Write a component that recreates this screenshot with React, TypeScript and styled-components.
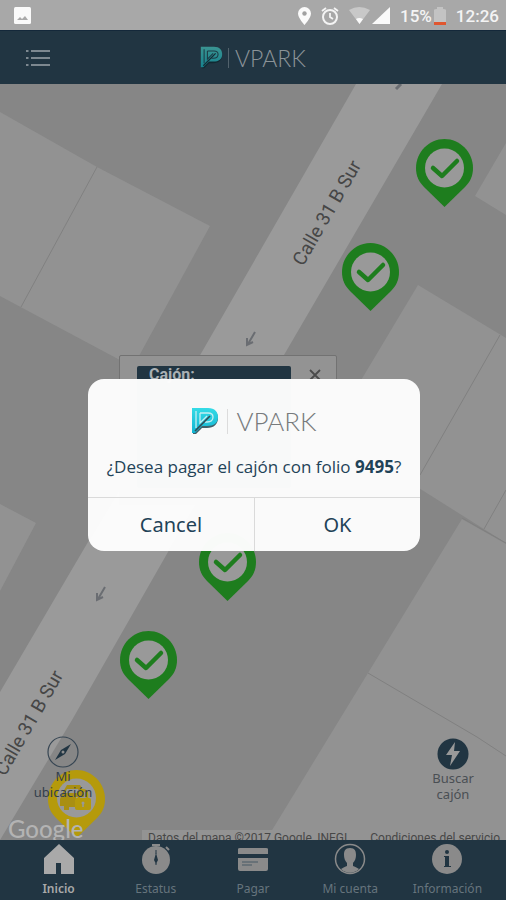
import React from "react";
import styled, { createGlobalStyle } from "styled-components";

const NAVY = "#213542";
const INK = "#1f4358";

const GlobalStyle = createGlobalStyle`
  * { box-sizing: border-box; }
  body { margin: 0; background: ${NAVY}; font-family: "Noto Sans", "Open Sans", sans-serif; }
  button { font: inherit; color: inherit; background: none; border: 0; padding: 0; cursor: pointer; }
`;

const Screen = styled.div`
  position: relative;
  display: flex;
  flex-direction: column;
  min-height: 100vh;
  overflow: hidden;
`;

const StatusBar = styled.header`
  display: flex;
  align-items: center;
  justify-content: space-between;
  height: 30px;
  padding: 1px 7px 0 14px;
  background: #a8a8a8;
  color: #f4f4f4;
  font: 500 17px/28px Roboto, sans-serif;
`;

const StatusGroup = styled.div`
  display: flex;
  align-items: center;
  gap: 10px;
`;

const SignalIcons = styled.div`
  display: flex;
  align-items: center;
  gap: 2px;
`;

const Battery = styled.span`
  display: flex;
  align-items: center;
  gap: 2px;
`;

const TitleBar = styled.div`
  display: grid;
  grid-template-columns: 1fr auto 1fr;
  align-items: center;
  height: 54px;
  padding: 0 25px;
  background: ${NAVY};
  border-top: 1px solid #14283a;
`;

const MenuButton = styled.button`
  display: flex;
  justify-self: start;
`;

const Brand = styled.div<{ $large?: boolean }>`
  display: flex;
  align-items: center;
  justify-content: center;
  min-height: ${(p) => (p.$large ? 32 : 28)}px;
  color: ${(p) => (p.$large ? "#777b7d" : "#8b9398")};
  font: ${(p) => (p.$large ? "300 26px/32px" : "300 23px/28px")} Lato, sans-serif;
  svg { width: ${(p) => (p.$large ? 28 : 23)}px; height: ${(p) => (p.$large ? 28 : 23)}px; }
`;

const BrandName = styled.span<{ $large?: boolean }>`
  margin-left: ${(p) => (p.$large ? 8 : 5)}px;
  padding-left: ${(p) => (p.$large ? 8 : 6)}px;
  border-left: 1px solid ${(p) => (p.$large ? "#dcdcdc" : "#52626c")};
  line-height: ${(p) => (p.$large ? 25 : 20)}px;
`;

const MapArea = styled.main`
  position: relative;
  flex: 1;
  min-height: 500px;
  overflow: hidden;
  background: #868686;
`;

const MapDrawing = styled.svg`
  position: absolute;
  inset: 0;
  width: 100%;
  height: 100%;
  font: 19px Roboto, sans-serif;
`;

const PinButton = styled.button<{ $x: number; $y: number }>`
  position: absolute;
  left: ${(p) => p.$x}px;
  top: ${(p) => p.$y}px;
  display: flex;
`;

const InfoWindow = styled.section`
  position: absolute;
  left: 119px;
  top: 271px;
  display: flex;
  align-items: flex-start;
  justify-content: space-between;
  width: 218px;
  height: 150px;
  padding: 10px 13px 0 17px;
  background: #939393;
  border: 1px solid #727272;
  border-radius: 2px;
  color: #4b4b4b;
`;

const InfoCard = styled.div`
  width: 154px;
  height: 122px;
  padding: 0 12px;
  border-radius: 2px;
  background: ${NAVY};
  color: #a9b0b4;
  font: 700 16px/18px Roboto, sans-serif;
`;

const MapAction = styled.button<{ $side: "left" | "right" }>`
  position: absolute;
  ${(p) => (p.$side === "left" ? "left: 28px; bottom: 40px;" : "right: 18px; bottom: 38px;")}
  display: flex;
  flex-direction: column;
  align-items: center;
  width: 70px;
  color: ${(p) => (p.$side === "left" ? "#333f4c" : "#4a4f54")};
  font-size: 13px;
  line-height: 16px;
`;

const Watermark = styled.span`
  position: absolute;
  left: 8px;
  bottom: -3px;
  color: #b3b3b3;
  font: 500 24px/28px Lato, sans-serif;
`;

const Attribution = styled.div`
  position: absolute;
  right: 0;
  bottom: -6px;
  display: flex;
  justify-content: space-between;
  width: 364px;
  padding: 0 6px;
  background: #939393;
  color: #474747;
  font: 12px/16px Roboto, sans-serif;
  a { color: inherit; text-decoration: none; }
`;

const TabBar = styled.nav`
  display: grid;
  grid-template-columns: repeat(5, 1fr);
  height: 60px;
  padding: 3px 10px 0;
  background: ${NAVY};
`;

const Tab = styled.button<{ $active?: boolean }>`
  display: flex;
  flex-direction: column;
  align-items: center;
  gap: 5px;
  color: ${(p) => (p.$active ? "#a9a9a9" : "#66747d")};
  font-size: 12px;
  font-weight: ${(p) => (p.$active ? 600 : 400)};
  line-height: 18px;
  white-space: nowrap;
  svg { color: ${(p) => (p.$active ? "#a9a9a9" : "#8a8a8a")}; }
`;

const DialogLayer = styled.div`
  position: absolute;
  inset: 30px 0 0;
  display: grid;
  place-items: center;
  padding: 0 86px 0 88px;
`;

const Dialog = styled.div`
  width: 100%;
  max-width: 400px;
  overflow: hidden;
  border-radius: 16px;
  background: rgba(252, 252, 252, 0.985);
  color: ${INK};
`;

const DialogBody = styled.div`
  display: flex;
  flex-direction: column;
  gap: 18px;
  padding: 26px 0 18px;
`;

const Message = styled.p`
  margin: 0;
  text-align: center;
  font-family: "Open Sans", "Noto Sans", sans-serif;
  font-size: 17px;
  line-height: 24px;
`;

const DialogActions = styled.div`
  display: grid;
  grid-template-columns: 1fr 1fr;
  border-top: 1px solid #dadada;
`;

const ActionButton = styled.button`
  height: 53px;
  && { font-size: 20px; }
  & + & { border-left: 1px solid #dadada; }
`;

const BrandMark = ({ dim }: { dim?: boolean }) => (
  <svg viewBox="0 0 28 28" fill="none" aria-hidden="true">
    <defs>
      <linearGradient id={dim ? "markDim" : "mark"} x1="0" y1="0" x2="0" y2="1">
        <stop offset="0" stopColor={dim ? "#3a9492" : "#35dbe6"} />
        <stop offset="1" stopColor={dim ? "#16838f" : "#12b4d2"} />
      </linearGradient>
    </defs>
    <path d="M2 2h15c7 0 10 4 10 9 0 6-4 10-11 10h-5l-6 6H2z" fill={dim ? "#122831" : "#40616a"} />
    <path d="M1 1h16c7 0 10 4 10 9 0 6-4 9-11 9h-5l-7 7H1z" fill={`url(#${dim ? "markDim" : "mark"})`} />
    <path d="M5 4v17M9 6h8c4 0 5 2 5 4 0 3-2 5-6 5h-2M9 6v10l7-7" stroke={dim ? "#1d3b46" : "#c5eef2"} strokeWidth="1.300" />
    <path d="M4 24L19 9" stroke={dim ? "#142b35" : "#334a52"} strokeWidth="1.600" />
  </svg>
);

const Logo = ({ large }: { large?: boolean }) => (
  <Brand $large={large}>
    <BrandMark dim={!large} />
    <BrandName $large={large}>VPARK</BrandName>
  </Brand>
);

const PIN_SHAPE = "M28.500 0C44 0 57 13 57 29c0 8-3 14-8 19L28.500 68 8 48C3 43 0 37 0 29 0 13 13 0 28.500 0Z";

const CheckPin = () => (
  <svg width="57" height="68" viewBox="0 0 57 68" fill="none" aria-hidden="true">
    <path d={PIN_SHAPE} fill="#1e7d1e" />
    <circle cx="28.500" cy="29" r="19.500" fill="#999" />
    <path d="M17 29l9 8L41 22" stroke="#1e7d1e" strokeWidth="4.500" strokeLinecap="round" strokeLinejoin="round" />
  </svg>
);

const LockedPin = () => (
  <svg width="57" height="68" viewBox="0 0 57 68" fill="none" aria-hidden="true">
    <path d={PIN_SHAPE} fill="#b59a0b" />
    <circle cx="28.500" cy="28" r="19.500" fill="#999" />
    <path d="M12 29l3-7 4-7h13l4 7v5h-8v10h-7v3h-5v-4h-4zM19 19l-2 4h15l-2-4z" fill="#a98f12" fillRule="evenodd" />
    <rect x="27" y="28" width="16" height="12" rx="2" fill="#b59a0b" />
    <path d="M31 28v-4a4 4 0 0 1 8 0v4" stroke="#b59a0b" strokeWidth="2.500" />
    <circle cx="35" cy="33" r="1.500" fill="#999" />
    <path d="M35 33v4" stroke="#999" strokeWidth="1.500" />
  </svg>
);

const pins = [
  { x: 416, y: 55 },
  { x: 342, y: 159 },
  { x: 199, y: 449 },
  { x: 120, y: 547 },
];

const StreetMap = () => (
  <MapDrawing viewBox="0 84 506 756" preserveAspectRatio="xMidYMid slice">
    <g fill="#929292">
      <path d="M0 112L97 167 210 226 133 367 0 296ZM506 143L475 196 506 215ZM0 504L36 523 0 591Z" />
      <path d="M418 285L506 338V543L330 432Z" />
      <path d="M462 519L506 544V840H266L368 673Z" />
    </g>
    <path d="M356 84H442L284 355 168 552 72 720 0 840V692L88 542 199 357Z" fill="#9a9a9a" />
    <path d="M97 167L21 307M368 673L477 737 506 756M462 518L506 543M506 490L484 529M500 335L420 475" stroke="#808080" fill="none" />
    <g fill="none" stroke="#6a6d72" strokeWidth="2">
      <path d="M255 332L248 344M247 338V345L253 342" />
      <path d="M105 587L98 599M97 593V600L103 597" />
      <path d="M401 84L396 89" strokeWidth="3" />
    </g>
    <g fill="#464646">
      <text transform="translate(303 267) rotate(-60)">Calle 31 B Sur</text>
      <text transform="translate(5 777) rotate(-60)">Calle 31 B Sur</text>
    </g>
  </MapDrawing>
);

const tabs = [
  {
    label: "Inicio",
    icon: <path d="M15 0L0 14V30H12V19H17V30H30V14Z" fill="currentColor" />,
  },
  {
    label: "Estatus",
    icon: (
      <>
        <circle cx="15" cy="16" r="14" fill="currentColor" />
        <path d="M11 1h8M25 3l3 3" stroke="currentColor" strokeWidth="2" />
        <path d="M15 9l2 7-2 4-2-4z" fill={NAVY} />
        <path d="M15 6v4M15 19v2" stroke={NAVY} />
      </>
    ),
  },
  {
    label: "Pagar",
    icon: (
      <>
        <path d="M0 5q0-1 2-1H28q2 0 2 1V10H0ZM0 14H30V25q0 2-2 2H2q-2 0-2-2Z" fill="currentColor" />
        <path d="M4 18h16M4 21h10" stroke="#5d6a71" strokeWidth="1.500" />
      </>
    ),
  },
  {
    label: "Mi cuenta",
    icon: (
      <>
        <circle cx="15" cy="15" r="14.500" fill="none" stroke="currentColor" strokeWidth="1.500" />
        <path d="M15 4c5 0 6 3 6 7 0 3-1 6-3 8v3c3 1 4 2 6 3-5 5-13 5-18 0 2-1 3-2 6-3v-3c-2-2-3-5-3-8 0-4 1-7 6-7z" fill="currentColor" />
      </>
    ),
  },
  {
    label: "Información",
    icon: (
      <>
        <circle cx="15" cy="15" r="15" fill="currentColor" />
        <circle cx="15" cy="8" r="2" fill={NAVY} />
        <path d="M12 12h5v10h2v1h-7v-1h1v-9h-1z" fill={NAVY} />
      </>
    ),
  },
];

export default function App() {
  return (
    <Screen>
      <GlobalStyle />
      <StatusBar>
        <svg width="17" height="17" viewBox="0 0 17 17" aria-hidden="true">
          <rect width="17" height="17" rx="1.500" fill="#fafafa" />
          <path d="M3 13l3-3 2 2 3-3 3 4z" fill="#aaa" />
        </svg>
        <StatusGroup>
          <svg width="13" height="18" viewBox="0 0 13 18" aria-hidden="true">
            <path d="M6.500 0A6.500 6.500 0 0 1 13 6.500C13 11 6.500 18 6.500 18S0 11 0 6.500A6.500 6.500 0 0 1 6.500 0Z" fill="#fafafa" />
            <circle cx="6.500" cy="6.500" r="2.200" fill="#a0a0a0" />
          </svg>
          <svg width="18" height="18" viewBox="0 0 18 18" fill="none" stroke="#f4f4f4" aria-hidden="true">
            <circle cx="9" cy="10" r="7" strokeWidth="2" />
            <path d="M1 4l4-3M17 4l-4-3M9 6v4l3 2" strokeWidth="1.800" />
          </svg>
          <SignalIcons>
            <svg width="21" height="17" viewBox="0 0 21 17" aria-hidden="true">
              <path d="M0 3Q10 -3 21 3L10.500 17Z" fill="#c8c8c8" />
              <path d="M7 12q3-2 7 0l-3.500 5z" fill="#fafafa" />
            </svg>
            <svg width="18" height="17" viewBox="0 0 18 17" aria-hidden="true">
              <path d="M18 0V17H0Z" fill="#fafafa" />
            </svg>
          </SignalIcons>
          <Battery>
            15%
            <svg width="12" height="18" viewBox="0 0 12 18" aria-hidden="true">
              <path d="M0 3q0-1 3-1V0H9V2q3 0 3 1V18H0Z" fill="#c3c3c3" />
              <path d="M0 15H12V18H0Z" fill="#e0562f" />
            </svg>
          </Battery>
          <span>12:26</span>
        </StatusGroup>
      </StatusBar>
      <TitleBar>
        <MenuButton aria-label="Menú">
          <svg width="26" height="18" viewBox="0 0 26 18" stroke="#7d8890" strokeWidth="2" aria-hidden="true">
            <path d="M6 2H25M6 9H25M6 16H25M1 2H3.500M1 9H3.500M1 16H3.500" />
          </svg>
        </MenuButton>
        <Logo />
      </TitleBar>
      <MapArea>
        <StreetMap />
        {pins.map((pin) => (
          <PinButton key={`${pin.x}-${pin.y}`} $x={pin.x} $y={pin.y} aria-label="Cajón disponible">
            <CheckPin />
          </PinButton>
        ))}
        <PinButton $x={48} $y={686} aria-label="Cajón ocupado">
          <LockedPin />
        </PinButton>
        <InfoWindow>
          <InfoCard>Cajón:</InfoCard>
          <button aria-label="Cerrar">
            <svg width="16" height="20" viewBox="0 0 16 20" stroke="#4b4b4b" strokeWidth="1.800" aria-hidden="true">
              <path d="M3 4L13 14M13 4L3 14" />
            </svg>
          </button>
        </InfoWindow>
        <Watermark>Google</Watermark>
        <Attribution>
          <span>Datos del mapa ©2017 Google, INEGI</span>
          <a href="#condiciones">Condiciones del servicio</a>
        </Attribution>
        <MapAction $side="left">
          <svg width="32" height="32" viewBox="0 0 32 32" fill="none" aria-hidden="true">
            <circle cx="16" cy="16" r="15" stroke="#374653" strokeWidth="1.200" />
            <path d="M24 8L18 18 8 24 14 14Z" fill={NAVY} />
            <circle cx="16" cy="16" r="1.500" fill="#8d8d8d" />
          </svg>
          <span>Mi<br />ubicación</span>
        </MapAction>
        <MapAction $side="right">
          <svg width="32" height="32" viewBox="0 0 32 32" aria-hidden="true">
            <circle cx="16" cy="16" r="15.500" fill={NAVY} />
            <path d="M18 4L9 17H15L13 28 23 13H17Z" fill="#999" />
          </svg>
          <span>Buscar<br />cajón</span>
        </MapAction>
      </MapArea>
      <TabBar>
        {tabs.map((tab, i) => (
          <Tab key={tab.label} $active={i === 0}>
            <svg width="32" height="32" viewBox="-1 -1 32 32" aria-hidden="true">{tab.icon}</svg>
            {tab.label}
          </Tab>
        ))}
      </TabBar>
      <DialogLayer>
        <Dialog role="dialog" aria-modal="true" aria-labelledby="pay-message">
          <DialogBody>
            <Logo large />
            <Message id="pay-message">¿Desea pagar el cajón con folio <strong>9495</strong>?</Message>
          </DialogBody>
          <DialogActions>
            <ActionButton>Cancel</ActionButton>
            <ActionButton>OK</ActionButton>
          </DialogActions>
        </Dialog>
      </DialogLayer>
    </Screen>
  );
}
